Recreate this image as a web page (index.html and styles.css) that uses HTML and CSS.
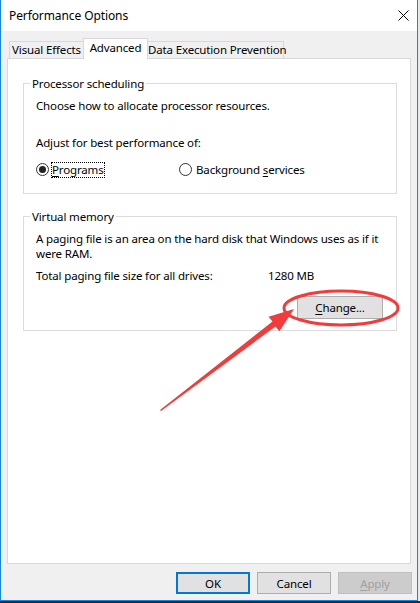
FILE: index.html
```html
<!DOCTYPE html>
<html>
<head>
<meta charset="utf-8">
<title>Performance Options</title>
<link rel="stylesheet" href="styles.css">
</head>
<body>
<div class="screen">
  <div class="window">
    <div class="titlebar">
      <span class="title">Performance Options</span>
      <svg class="close" width="11" height="11" viewBox="0 0 11 11"><path d="M0.5 0.5L10.5 10.5M10.5 0.5L0.5 10.5" stroke="#000" stroke-width="1" fill="none"/></svg>
    </div>
    <div class="body">
      <div class="tabs">
        <div class="tab-line tab-line-left"></div>
        <div class="tab tab-first">Visual Effects</div>
        <div class="tab tab-active">Advanced</div>
        <div class="tab tab-last">Data Execution Prevention</div>
        <div class="tab-line tab-line-fill"></div>
      </div>
      <div class="panel">
        <fieldset class="group group-cpu">
          <legend>Processor scheduling</legend>
          <p class="line first">Choose how to allocate processor resources.</p>
          <p class="line adjust">Adjust for best performance of:</p>
          <div class="radios">
            <div class="option option-first"><span class="radio checked"></span><span class="label focus"><u>P</u>rograms</span></div>
            <div class="option option-second"><span class="radio"></span><span class="label">Background <u>s</u>ervices</span></div>
          </div>
        </fieldset>
        <fieldset class="group group-vm">
          <legend>Virtual memory</legend>
          <p class="line first">A paging file is an area on the hard disk that Windows uses as if it<br>were RAM.</p>
          <div class="line total"><span>Total paging file size for all drives:</span><span>1280 MB</span></div>
          <div class="change-row"><button class="btn change"><u>C</u>hange...</button></div>
        </fieldset>
      </div>
      <div class="footer">
        <button class="btn ok">OK</button>
        <button class="btn">Cancel</button>
        <button class="btn disabled"><u>A</u>pply</button>
      </div>
    </div>
  </div>
  <div class="edge-right"></div>
  <div class="edge-bottom"></div>
  <svg class="annot" width="420" height="603" viewBox="0 0 420 603">
    <ellipse cx="341" cy="308" rx="57" ry="17" fill="none" stroke="#f23b3b" stroke-width="3"/>
    <polygon points="160,410 272.5,321.5 268.6,316.8 294,309 279.4,331.2 275.5,326.5 161,411" fill="#f23b3b"/>
  </svg>
</div>
</body>
</html>
```
FILE: styles.css
```css
* { box-sizing: border-box; }
html, body { margin: 0; padding: 0; }
body {
  width: 420px;
  height: 603px;
  overflow: hidden;
  background: #1c2a3a;
  font-family: "Noto Sans", "Liberation Sans", sans-serif;
  font-size: 11.5px;
  letter-spacing: -0.15px;
  color: #000;
}
.screen {
  position: relative;
  width: 420px;
  height: 603px;
  display: grid;
  grid-template-columns: 418px 2px;
  grid-template-rows: 601px 2px;
}
.window {
  grid-column: 1;
  grid-row: 1;
  display: flex;
  flex-direction: column;
  background: #f0f0f0;
  border-left: 1px solid #1a84d8;
  border-right: 1px solid #1a84d8;
  border-bottom: 1px solid #1a84d8;
}
.edge-right { grid-column: 2; grid-row: 1; background: #e6e9ec; }
.edge-bottom { grid-column: 1 / 3; grid-row: 2; background: #1c2a3a; }

.titlebar {
  height: 31px;
  flex: none;
  background: #fff;
  display: flex;
  align-items: center;
  justify-content: space-between;
  padding: 0 8px 0 8px;
}
.title { line-height: 15px; font-size: 12px; letter-spacing: -0.1px; }
.close { display: block; }

.body {
  flex: 1;
  display: flex;
  flex-direction: column;
  padding: 7px 6px 6px 6px;
}
.tabs {
  flex: none;
  height: 21px;
  display: flex;
  align-items: flex-end;
}
.tab-line { height: 1px; background: #d9d9d9; }
.tab-line-left { width: 2px; }
.tab-line-fill { flex: 1; }
.tab {
  height: 18px;
  line-height: 15px;
  text-align: center;
  white-space: nowrap;
  background: #f0f0f0;
  border-top: 1px solid #d9d9d9;
  border-bottom: 1px solid #d9d9d9;
}
.tab-first { width: 74px; border-left: 1px solid #d9d9d9; }
.tab-active {
  width: 65px;
  height: 21px;
  padding-top: 1px;
  background: #fff;
  border: 1px solid #d9d9d9;
  border-bottom: none;
}
.tab-last { width: 136px; border-right: 1px solid #d9d9d9; }

.panel {
  flex: 1;
  background: #fff;
  border: 1px solid #d9d9d9;
  border-top: none;
  padding: 17px 0 0 15px;
}
.group {
  width: 374px;
  margin: 0;
  padding: 0 12px;
  min-width: 0;
  border: 1px solid #dcdcdc;
}
.group legend {
  margin-left: -6px;
  padding: 0 2px;
  line-height: 15px;
}
.group-cpu { padding-bottom: 16px; }
.group-vm { margin-top: 15px; padding-bottom: 11px; }
.line { margin: 0; line-height: 15px; white-space: nowrap; }
.line.first { margin-top: 7px; }
.adjust { margin-top: 22px; }
.radios {
  margin-top: 12px;
  display: flex;
  align-items: center;
  height: 15px;
}
.option { display: flex; align-items: center; gap: 2px; }
.option-first { width: 143px; }
.option-second { gap: 3px; }
.radio {
  width: 13px;
  height: 13px;
  border: 1px solid #333;
  border-radius: 50%;
  background: #fff;
  display: flex;
  align-items: center;
  justify-content: center;
}
.radio.checked::after {
  content: "";
  width: 7px;
  height: 7px;
  border-radius: 50%;
  background: #222;
}
.label {
  line-height: 14px;
  border: 1px dotted transparent;
}
.label.focus { border-color: #000; }
u { text-underline-offset: 2px; text-decoration-thickness: 1px; }
.total {
  margin-top: 7px;
  display: grid;
  grid-template-columns: 232px auto;
}
.change-row {
  margin-top: 13px;
  display: flex;
  justify-content: flex-end;
  padding-right: 1px;
}
.btn {
  font-family: inherit;
  font-size: 11.5px;
  letter-spacing: -0.15px;
  color: #000;
  background: #e1e1e1;
  border: 1px solid #adadad;
  border-radius: 0;
  padding: 0;
  margin: 0;
  line-height: 15px;
}
.change { width: 86px; height: 23px; }
.footer {
  flex: none;
  margin-top: 8px;
  margin-right: -1px;
  height: 22px;
  display: flex;
  justify-content: flex-end;
  gap: 7px;
}
.footer .btn { width: 74px; height: 22px; }
.footer .ok { border: 2px solid #0078d7; }
.footer .disabled { background: #cccccc; border-color: #bfbfbf; color: #a0a0a0; }

.annot {
  position: absolute;
  left: 0;
  top: 0;
  pointer-events: none;
}
```
